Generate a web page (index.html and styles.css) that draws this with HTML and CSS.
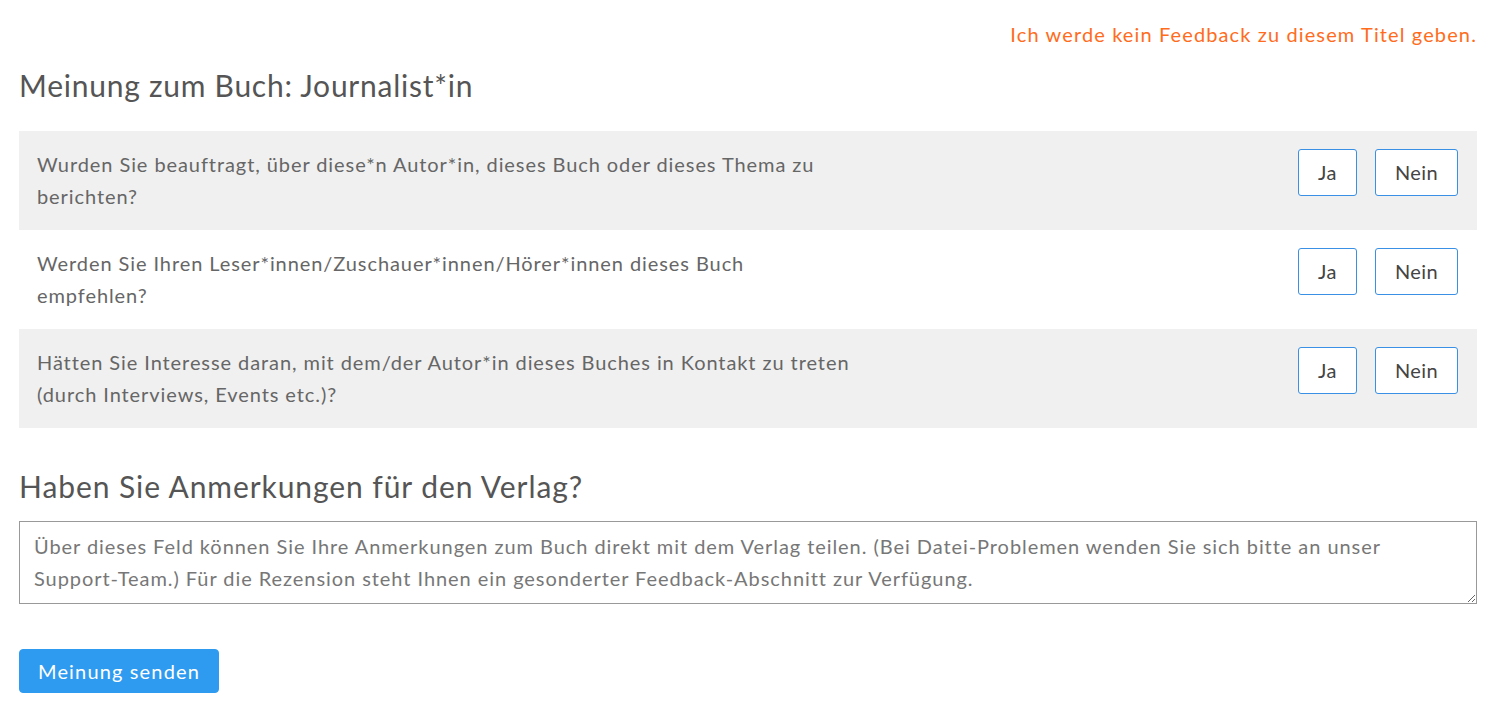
FILE: index.html
```html
<!DOCTYPE html>
<html lang="de">
<head>
<meta charset="utf-8">
<title>Meinung zum Buch</title>
<link rel="stylesheet" href="styles.css">
</head>
<body>
<main class="page">
  <div class="skip-row"><a class="skip-link" href="#">Ich werde kein Feedback zu diesem Titel geben.</a></div>
  <h1 class="title">Meinung zum Buch: Journalist*in</h1>
  <div class="questions">
    <div class="question">
      <p class="question-text">Wurden Sie beauftragt, über diese*n Autor*in, dieses Buch oder dieses Thema zu<br>berichten?</p>
      <div class="answers"><button class="answer">Ja</button><button class="answer">Nein</button></div>
    </div>
    <div class="question">
      <p class="question-text">Werden Sie Ihren Leser*innen/Zuschauer*innen/Hörer*innen dieses Buch<br>empfehlen?</p>
      <div class="answers"><button class="answer">Ja</button><button class="answer">Nein</button></div>
    </div>
    <div class="question">
      <p class="question-text">Hätten Sie Interesse daran, mit dem/der Autor*in dieses Buches in Kontakt zu treten<br>(durch Interviews, Events etc.)?</p>
      <div class="answers"><button class="answer">Ja</button><button class="answer">Nein</button></div>
    </div>
  </div>
  <h2 class="subtitle">Haben Sie Anmerkungen für den Verlag?</h2>
  <textarea class="notes" placeholder="Über dieses Feld können Sie Ihre Anmerkungen zum Buch direkt mit dem Verlag teilen. (Bei Datei-Problemen wenden Sie sich bitte an unser Support-Team.) Für die Rezension steht Ihnen ein gesonderter Feedback-Abschnitt zur Verfügung."></textarea>
  <div class="submit-row"><button class="submit">Meinung senden</button></div>
</main>
</body>
</html>
```
FILE: styles.css
```css
html, body {
  margin: 0;
  padding: 0;
  background: #ffffff;
}
body {
  font-family: "Lato", "Open Sans", sans-serif;
  color: #666666;
}
.page {
  padding: 18px 20px 0 19px;
  display: flex;
  flex-direction: column;
}
.skip-row {
  display: flex;
  justify-content: flex-end;
  line-height: 32px;
}
.skip-link {
  color: #ff6c1c;
  text-decoration: none;
  font-size: 20px;
  letter-spacing: 1.12px;
}
.title {
  margin: 17px 0 0 0;
  font-size: 30px;
  line-height: 36px;
  font-weight: 400;
  color: #555555;
  letter-spacing: 0.75px;
}
.questions {
  margin-top: 28px;
  display: flex;
  flex-direction: column;
}
.question {
  display: flex;
  justify-content: space-between;
  align-items: flex-start;
  padding: 17px 19px 18px 18px;
  background: #ffffff;
}
.question:nth-child(odd) {
  background: #f0f0f0;
}
.question-text {
  margin: 0;
  font-size: 20px;
  line-height: 32px;
  letter-spacing: 0.92px;
  color: #666666;
}
.answers {
  display: flex;
  gap: 18px;
  padding-top: 1px;
}
.answer {
  font-family: inherit;
  font-size: 20px;
  line-height: 24px;
  letter-spacing: 0.4px;
  color: #444444;
  background: #ffffff;
  border: 1px solid #3a90e4;
  border-radius: 3px;
  padding: 10px 19px 11px 19px;
}
.subtitle {
  margin: 40px 0 0 0;
  font-size: 30px;
  line-height: 36px;
  font-weight: 400;
  color: #555555;
  letter-spacing: 0.92px;
}
.notes {
  margin-top: 17px;
  box-sizing: border-box;
  width: 100%;
  height: 83px;
  padding: 8px 24px 9px 14px;
  border: 1px solid #999999;
  border-radius: 0;
  font-family: inherit;
  font-size: 20px;
  line-height: 32px;
  letter-spacing: 0.94px;
  color: #666666;
}
.notes::placeholder {
  color: #777777;
  opacity: 1;
}
.submit-row {
  margin-top: 45px;
}
.submit {
  font-family: inherit;
  font-size: 20px;
  line-height: 24px;
  letter-spacing: 1.15px;
  color: #ffffff;
  background: #2e9bf0;
  border: 1px solid #2e9bf0;
  border-radius: 4px;
  padding: 9px 18px;
}
```
